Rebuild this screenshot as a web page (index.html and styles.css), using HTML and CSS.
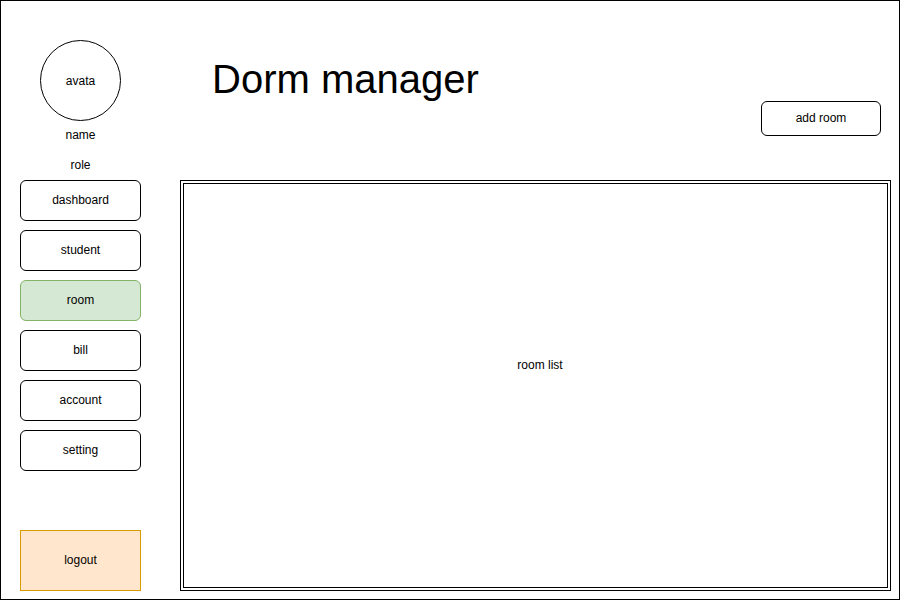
FILE: index.html
```html
<!DOCTYPE html>
<html lang="en">
<head>
<meta charset="utf-8">
<title>Dorm manager</title>
<link rel="stylesheet" href="styles.css">
</head>
<body>
<div class="frame">
  <aside class="sidebar">
    <div class="avatar">avata</div>
    <div class="label label-name">name</div>
    <div class="label">role</div>
    <nav class="nav">
      <div class="btn">dashboard</div>
      <div class="btn">student</div>
      <div class="btn btn-active">room</div>
      <div class="btn">bill</div>
      <div class="btn">account</div>
      <div class="btn">setting</div>
    </nav>
    <div class="logout">logout</div>
  </aside>
  <main class="main">
    <header class="header">
      <h1 class="title">Dorm manager</h1>
      <div class="add-btn">add room</div>
    </header>
    <section class="list">
      <span class="list-label">room list</span>
    </section>
  </main>
</div>
</body>
</html>
```

FILE: styles.css
```css
* { box-sizing: border-box; }
html, body { margin: 0; padding: 0; background: #fff; }
body {
  font-family: "Liberation Sans", Arial, sans-serif;
  font-size: 12px;
  color: #000;
}
.frame {
  width: 900px;
  height: 600px;
  border: 1px solid #000;
  display: flex;
}
.sidebar {
  width: 160px;
  flex: none;
  display: flex;
  flex-direction: column;
  align-items: flex-start;
  padding: 39px 0 8px 19px;
}
.avatar {
  width: 81px;
  height: 81px;
  margin-left: 20px;
  border: 1px solid #000;
  border-radius: 50%;
  display: flex;
  align-items: center;
  justify-content: center;
}
.label {
  width: 121px;
  height: 30px;
  line-height: 30px;
  text-align: center;
}
.label-name {
  height: 29px;
  line-height: 29px;
}
.nav {
  display: flex;
  flex-direction: column;
  gap: 9px;
}
.btn {
  width: 121px;
  height: 41px;
  border: 1px solid #000;
  border-radius: 6px;
  display: flex;
  align-items: center;
  justify-content: center;
  padding-bottom: 2px;
  background: #fff;
}
.btn-active {
  background: #d5e8d4;
  border-color: #82b366;
}
.logout {
  margin-top: auto;
  width: 121px;
  height: 61px;
  border: 1px solid #d79b00;
  background: #ffe6cc;
  display: flex;
  align-items: center;
  justify-content: center;
  padding-bottom: 2px;
}
.main {
  flex: 1;
  display: flex;
  flex-direction: column;
  padding: 0 8px 8px 19px;
}
.header {
  height: 179px;
  flex: none;
  display: flex;
  justify-content: space-between;
  align-items: flex-start;
}
.title {
  margin: 55px 0 0 32px;
  font-size: 40px;
  font-weight: normal;
  line-height: 46px;
}
.add-btn {
  margin: 100px 10px 0 0;
  width: 120px;
  height: 35px;
  border: 1px solid #000;
  border-radius: 6px;
  display: flex;
  align-items: center;
  justify-content: center;
  padding-bottom: 2px;
}
.list {
  width: 711px;
  height: 411px;
  border: 4px double #000;
  display: flex;
  align-items: center;
  justify-content: center;
  padding: 0 0 41px 9px;
}
```
